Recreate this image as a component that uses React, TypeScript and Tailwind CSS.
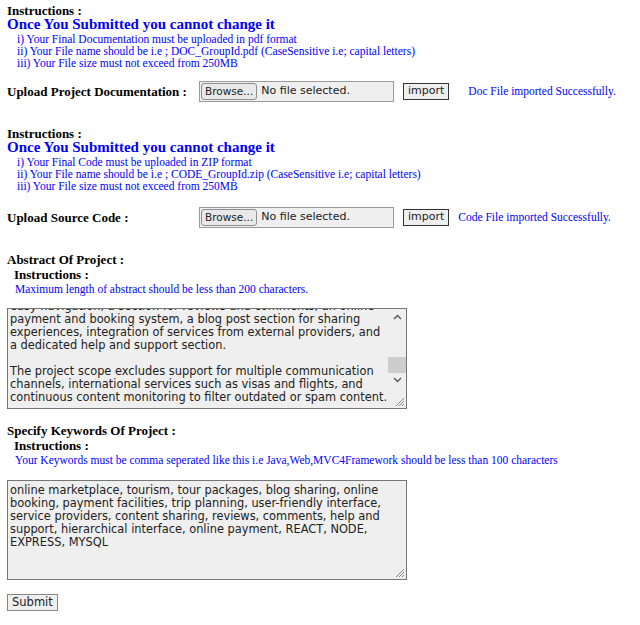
const serif = "font-['Liberation_Serif','Times_New_Roman',serif]";
const sans = "font-['DejaVu_Sans',Verdana,sans-serif]";

const FileBox = () => (
  <div className="flex h-[21px] w-[195px] items-center border border-[#9a9a9a] bg-[#efefef] pl-[1px]">
    <div className={`flex h-[17px] items-center rounded-[3px] border border-[#8f8f8f] bg-[#e9e9e9] px-[3px] text-[10.5px] text-[#222] ${sans}`}>
      Browse...
    </div>
    <span className={`ml-[4px] text-[11px] text-[#222] ${sans}`}>No file selected.</span>
  </div>
);

const ImportBtn = () => (
  <div className={`flex h-[17px] items-center border border-[#333] bg-[#efefef] px-[4px] text-[11px] text-[#222] ${sans}`}>
    import
  </div>
);

const Section = ({ lines, label, msg, msgGap, rowGap }: { lines: string[]; label: string; msg: string; msgGap: string; rowGap: string }) => (
  <div>
    <p className="text-[13px] font-bold leading-[12px] text-black">Instructions :</p>
    <p className="text-[15px] font-bold leading-[15px] text-[#0000ff]">Once You Submitted you cannot change it</p>
    <div className="mt-[1px] pl-[10px] text-[11.5px] leading-[12px] text-[#0000ff]">
      {lines.map(l => (
        <p key={l}>{l}</p>
      ))}
    </div>
    <div className={`${rowGap} flex items-center`}>
      <span className="w-[192px] text-[13px] font-bold text-black">{label}</span>
      <FileBox />
      <div className="ml-[9px]">
        <ImportBtn />
      </div>
      <span className={`${msgGap} text-[11.5px] text-[#0000ff]`}>{msg}</span>
    </div>
  </div>
);

const Grip = () => (
  <svg className="absolute bottom-[1px] right-[1px]" width="12" height="12" viewBox="0 0 12 12">
    <path d="M11 3 L3 11 M11 6 L6 11 M11 9 L9 11" stroke="#8a8a8a" strokeWidth="1" />
  </svg>
);

const abstractLines = [
  'easy navigation, a section for reviews and comments, an online',
  'payment and booking system, a blog post section for sharing',
  'experiences, integration of services from external providers, and',
  'a dedicated help and support section.',
  '\u00a0',
  'The project scope excludes support for multiple communication',
  'channels, international services such as visas and flights, and',
  'continuous content monitoring to filter outdated or spam content.',
];

const keywordLines = [
  'online marketplace, tourism, tour packages, blog sharing, online',
  'booking, payment facilities, trip planning, user-friendly interface,',
  'service providers, content sharing, reviews, comments, help and',
  'support, hierarchical interface, online payment, REACT, NODE,',
  'EXPRESS, MYSQL',
];

export default function App() {
  return (
    <div className={`min-h-screen bg-white px-[7px] pt-[5px] ${serif}`}>
      <Section
        lines={[
          'i) Your Final Documentation must be uploaded in pdf format',
          'ii) Your File name should be i.e ; DOC_GroupId.pdf (CaseSensitive i.e; capital letters)',
          'iii) Your File size must not exceed from 250MB',
        ]}
        label="Upload Project Documentation :"
        msg="Doc File imported Successfully."
        msgGap="ml-[19px]"
        rowGap="mt-[12px]"
      />
      <div className="mt-[26px]">
        <Section
          lines={[
            'i) Your Final Code must be uploaded in ZIP format',
            'ii) Your File name should be i.e ; CODE_GroupId.zip (CaseSensitive i.e; capital letters)',
            'iii) Your File size must not exceed from 250MB',
          ]}
          label="Upload Source Code :"
          msg="Code File imported Successfully."
          msgGap="ml-[9px]"
          rowGap="mt-[15px]"
        />
      </div>

      <p className="mt-[25px] text-[13px] font-bold leading-[14px] text-black">Abstract Of Project :</p>
      <p className="ml-[7px] mt-[1px] text-[13px] font-bold leading-[14px] text-black">Instructions :</p>
      <p className="ml-[8px] mt-[1px] text-[11.5px] leading-[12px] text-[#0000ff]">
        Maximum length of abstract should be less than 200 characters.
      </p>

      <div className="relative mt-[13px] h-[101px] w-[400px] overflow-hidden border border-[#767676] bg-[#efefef]">
        <div className={`-mt-[9px] pl-[2px] pr-[20px] text-[11.4px] leading-[13px] text-[#222] ${sans}`}>
          {abstractLines.map((l, i) => (
            <p key={i} className="whitespace-nowrap">{l}</p>
          ))}
        </div>
        <div className="absolute right-0 top-0 flex h-full w-[18px] flex-col items-center">
          <svg className="mt-[5px]" width="9" height="6" viewBox="0 0 9 6">
            <path d="M1 5 L4.5 1.5 L8 5" stroke="#555" strokeWidth="1.4" fill="none" />
          </svg>
          <div className="mt-[37px] h-[16px] w-full bg-[#cdcdcd]" />
          <svg className="mt-[4px]" width="9" height="6" viewBox="0 0 9 6">
            <path d="M1 1 L4.5 4.5 L8 1" stroke="#555" strokeWidth="1.4" fill="none" />
          </svg>
        </div>
        <Grip />
      </div>

      <p className="mt-[15px] text-[13px] font-bold leading-[14px] text-black">Specify Keywords Of Project :</p>
      <p className="ml-[7px] mt-[1px] text-[13px] font-bold leading-[14px] text-black">Instructions :</p>
      <p className="ml-[8px] mt-[1px] text-[11.5px] leading-[12px] text-[#0000ff]">
        Your Keywords must be comma seperated like this i.e Java,Web,MVC4Framework should be less than 100 characters
      </p>

      <div className="relative mt-[14px] h-[100px] w-[400px] border border-[#767676] bg-[#efefef]">
        <div className={`pl-[2px] pt-[3px] text-[11.4px] leading-[13px] text-[#222] ${sans}`}>
          {keywordLines.map((l, i) => (
            <p key={i} className="whitespace-nowrap">{l}</p>
          ))}
        </div>
        <Grip />
      </div>

      <div className={`mt-[14px] inline-flex h-[17px] items-center border border-[#888] bg-[#efefef] px-[4px] text-[11.5px] text-[#222] ${sans}`}>
        Submit
      </div>
    </div>
  );
}
